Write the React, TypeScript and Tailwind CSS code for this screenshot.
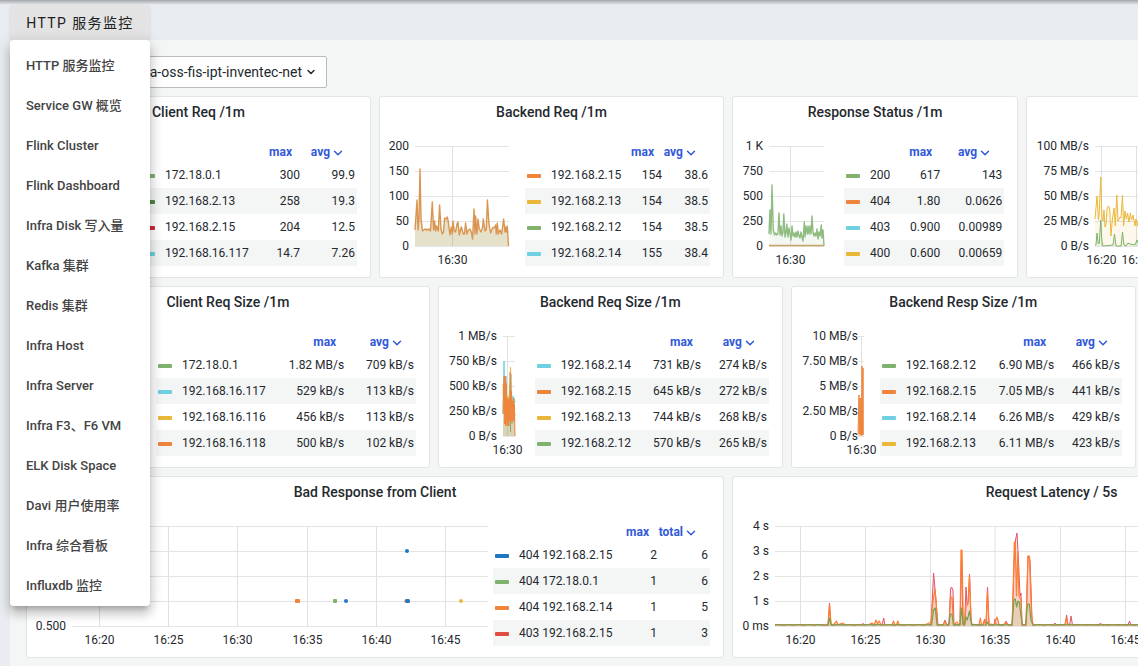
import type { ReactNode } from 'react';
import { ChevronDown } from 'lucide-react';

type Point = [number, number];
type Tick = [number, string];
type LegendRow = [color: string, name: string, max: string, last: string];

const GREEN = '#7eb26d';
const ORANGE = '#ef843c';
const YELLOW = '#eab839';
const CYAN = '#6ed0e0';
const BLUE = '#1f78c1';
const RED = '#e24d42';

const PLOT_TOP = 17;
const PLOT_HEIGHT = 100;

const menuItems = [
  'HTTP 服务监控',
  'Service GW 概览',
  'Flink Cluster',
  'Flink Dashboard',
  'Infra Disk 写入量',
  'Kafka 集群',
  'Redis 集群',
  'Infra Host',
  'Infra Server',
  'Infra F3、F6 VM',
  'ELK Disk Space',
  'Davi 用户使用率',
  'Infra 综合看板',
  'Influxdb 监控',
];

function linePath(points: Point[]) {
  return points.map(([x, v], i) => `${i ? 'L' : 'M'}${x} ${PLOT_HEIGHT - v}`).join('');
}

function areaPath(points: Point[]) {
  const first = points[0][0];
  const last = points[points.length - 1][0];
  return `${linePath(points)}L${last} ${PLOT_HEIGHT}L${first} ${PLOT_HEIGHT}Z`;
}

function Series({ points, color, fill = color, opacity = 0.1, width = 1 }: {
  points: Point[]; color: string; fill?: string; opacity?: number; width?: number;
}) {
  return (
    <>
      <path d={areaPath(points)} fill={fill} fillOpacity={opacity} />
      <path d={linePath(points)} fill="none" stroke={color} strokeWidth={width} strokeLinejoin="round" />
    </>
  );
}

function Chart({ width, left, plotWidth, yTicks, xTicks, labelGap = 6, children }: {
  width: number; left: number; plotWidth: number; yTicks: string[]; xTicks: Tick[]; labelGap?: number; children?: ReactNode;
}) {
  return (
    <svg width={width} height={148} className="shrink-0 overflow-visible text-xs">
      <g transform={`translate(${left} ${PLOT_TOP})`}>
        {[0, 25, 50, 75, 100].map((y) => (
          <line key={y} x1={0} x2={plotWidth} y1={y + 0.5} y2={y + 0.5} stroke="#e4e4e4" />
        ))}
        {xTicks.map(([x]) => (
          <line key={x} x1={x} x2={x} y1={0} y2={PLOT_HEIGHT} stroke="#e0e0e0" />
        ))}
        {children}
        {yTicks.map((label, i) => (
          <text key={label} x={-labelGap} y={PLOT_HEIGHT - 25 * (yTicks.length - 1 - i) + 4} textAnchor="end" fill="#24292e">
            {label}
          </text>
        ))}
        {xTicks.map(([x, label]) => (
          <text key={x} x={x} y={PLOT_HEIGHT + 18} textAnchor="middle" fill="#24292e">
            {label}
          </text>
        ))}
      </g>
    </svg>
  );
}

function Legend({ rows, columns, lastLabel = 'avg' }: {
  rows: LegendRow[]; columns: [number, number]; lastLabel?: string;
}) {
  return (
    <table className="mr-[13px] mt-[13px] h-min min-w-0 flex-1 table-fixed border-collapse text-xs">
      <colgroup>
        <col />
        <col style={{ width: columns[0] }} />
        <col style={{ width: columns[1] }} />
      </colgroup>
      <thead>
        <tr className="h-5 text-[#3259d8]">
          <th />
          <th className="p-0 pr-2 text-right font-bold">
            <button type="button" className="font-bold">max</button>
          </th>
          <th className="p-0 pr-3">
            <button type="button" className="ml-auto flex items-center justify-end gap-px font-bold">
              {lastLabel}
              <ChevronDown size={14} strokeWidth={2.5} className="mt-0.5 shrink-0" />
            </button>
          </th>
        </tr>
      </thead>
      <tbody>
        {rows.map(([color, name, max, last]) => (
          <tr key={name} className="h-[26px] whitespace-nowrap even:bg-[#f4f5f5]">
            <td className="p-0 pl-0.5">
              <span className="flex items-center gap-[10px]">
                <span className="mt-0.5 h-1 w-3.5 shrink-0 rounded-[1px]" style={{ backgroundColor: color }} />
                {name}
              </span>
            </td>
            <td className="p-0 text-right">{max}</td>
            <td className="p-0 pr-0.5 text-right">{last}</td>
          </tr>
        ))}
      </tbody>
    </table>
  );
}

function Panel({ title, span, children }: { title?: string; span: string; children?: ReactNode }) {
  return (
    <section className={`${span} flex h-[182px] flex-col overflow-hidden rounded-[3px] border border-[#e2e4e5] bg-white`}>
      <div className="h-8 shrink-0">
        {title && <h2 className="text-center text-sm font-medium leading-[30px]">{title}</h2>}
      </div>
      <div className="flex flex-1">{children}</div>
    </section>
  );
}

const backendReq: Point[] = [
  [0, 16], [2, 46], [3, 16], [4, 28], [5, 77], [6, 28], [7.5, 15], [10, 17], [12, 16], [14, 17], [15.5, 15],
  [17.3, 44], [18.6, 16], [19.6, 25], [20.6, 15], [21.6, 20], [23.3, 15], [24.6, 41], [26, 17], [27.3, 12],
  [28.5, 14], [29.6, 28], [31, 27], [32.3, 29], [33.3, 24], [35, 11], [36.3, 19], [37.3, 12], [38, 25],
  [39.3, 15], [40.6, 14], [42, 22], [43, 24], [44.3, 11], [46.3, 19], [48.3, 12], [49.5, 12], [50.6, 23],
  [52, 12], [53.3, 16], [55, 17], [56.3, 14], [57.6, 7], [59, 37], [60, 12], [60.6, 30], [62, 12], [63, 27],
  [64.3, 17], [66, 14], [67.6, 19], [68.3, 27], [70, 15], [71.3, 17], [72.4, 46], [74, 22], [75.6, 13],
  [77.6, 18], [80, 19], [80.6, 21], [81.3, 12], [82.3, 23], [83.3, 12], [85, 16], [86.6, 12], [88.6, 27],
  [90, 14], [90.6, 19], [91.3, 14], [92.3, 20], [93.5, 0],
];

const status200: Point[] = [
  [0, 12], [1, 36], [2, 12], [3, 61], [4.3, 16], [5.6, 11], [6.6, 13], [8, 11], [9, 13], [10, 33], [11, 11],
  [12, 20], [13, 10], [14, 14], [14.8, 32], [16, 9], [17, 13], [17.8, 22], [19, 9], [20, 18], [21, 12],
  [22, 6], [23, 20], [24, 10], [25, 13], [26, 9], [27, 14], [28, 9], [29, 15], [30, 10], [31, 8], [32, 14],
  [33, 9], [34, 5], [35.3, 24], [36, 9], [37, 20], [38.3, 12], [39, 20], [40, 12], [41, 20], [42, 12],
  [43, 30], [44, 14], [45, 10], [46, 13], [47, 10], [48, 17], [49, 7], [50, 14], [51, 10], [52.3, 21],
  [53, 8], [54, 16], [55, 0],
];

const throughputIn: Point[] = [
  [0, 27], [2, 50], [3.5, 26], [4.3, 34], [5.7, 69], [7, 28], [8, 25], [9, 36], [10, 19], [11, 22], [12, 37],
  [13.3, 40], [14.6, 38], [16, 10], [17.3, 26], [19, 38], [20.3, 20], [21.8, 51], [23, 25], [25, 29],
  [26, 28], [27.5, 51], [28.6, 20], [30, 35], [31.3, 27], [32.5, 33], [34, 24], [35.3, 33], [36.6, 26],
  [38, 31], [40, 20], [41, 27], [42.5, 20], [44, 30],
];

const throughputOut: Point[] = [
  [0, 1], [1, 1], [2, 13], [3.3, 2], [4.3, 3], [5.7, 26], [7, 4], [8, 0], [18, 1], [19.5, 12], [21, 0],
  [26, 0], [27.5, 14], [29, 1], [31, 0], [33, 3], [35, 2], [40, 1], [42, 6], [44, 1],
];

const sizeCyan: Point[] = [[0, 22], [1, 75], [2, 30], [3, 60], [4, 22], [6, 40], [8, 62], [9, 30], [10, 40], [12, 33]];
const sizeYellow: Point[] = [[0, 52], [1, 24], [2, 40], [3, 20], [5, 40], [6, 16], [7.5, 69], [8.5, 28], [10, 36], [12, 20]];
const sizeOrange: Point[] = [
  [0, 22], [0.6, 50], [1.2, 60], [1.7, 12], [2.2, 60], [2.7, 10], [3.2, 53], [3.8, 11], [4.3, 38], [4.8, 10],
  [5.3, 36], [5.8, 10], [6.3, 38], [6.8, 15], [7.2, 64], [7.8, 14], [8.3, 45], [8.8, 15], [9.3, 35], [9.8, 16],
  [10.4, 38], [10.9, 14], [11.4, 32], [12, 0],
];
const respOrange: Point[] = [
  [0, 2], [1, 41], [1.4, 2], [2, 38], [2.5, 1], [3, 38], [3.5, 1], [4, 70], [4.5, 1], [5, 68], [5.3, 1],
];

function withNoise(peaks: Point[], end: number): Point[] {
  const result: Point[] = [];
  let previous = 0;
  for (const peak of [...peaks, [end, 1] as Point]) {
    for (let x = previous + 2; x < peak[0] - 2.5; x += 2) {
      result.push([x, 1 + ((x * 7) % 5) * 0.12]);
    }
    result.push(peak);
    previous = peak[0];
  }
  return [[0, 1], ...result];
}

const latencyRed = withNoise([
  [53, 1], [54.5, 23], [56, 1], [86, 1], [88, 2.5], [90, 1], [107, 1], [108.7, 8], [110, 1], [156, 1], [158.6, 53], [161, 25], [163, 1],
  [168, 1], [170, 6], [172, 1], [174, 1], [175.5, 37], [176.5, 39], [178, 36], [179, 1], [185, 1], [186.6, 70],
  [188, 1], [189.6, 2], [191, 39], [192, 22], [193.2, 24], [194.5, 52], [196, 8], [197, 1], [208, 1],
  [209.5, 7], [211, 1], [212.5, 39], [214, 1], [219, 1], [220, 7], [221, 2], [229, 1], [231, 5], [233, 1],
  [237, 1], [239, 60], [240.5, 86], [242, 93], [243.5, 65], [245, 30], [246, 33], [247, 1], [251, 1],
  [253, 70], [255, 66], [257, 8], [258, 1], [278, 1], [280, 3], [281, 1], [290, 1], [291.6, 11], [293, 1], [294.6, 1], [296, 10],
  [297.5, 1], [324, 1], [325.5, 3], [327, 1], [353, 1], [354.5, 5], [356, 1],
], 590);

const latencyOrange = withNoise([
  [53, 1], [54.5, 21], [56, 2], [58, 1], [60, 3], [61.5, 5], [63, 1], [67, 3], [69, 2], [72, 1], [97, 3],
  [99, 1], [101, 6], [102.5, 2], [104.3, 5], [106, 1], [117, 1], [118.5, 5], [120, 1], [121.5, 1], [122.8, 5],
  [124, 1], [152, 2], [156, 4], [158, 25], [160, 37], [161.3, 22], [162.3, 1], [168, 1], [170, 4], [172, 1],
  [174, 1], [175.6, 29], [177, 29], [178.5, 1], [182, 4], [184, 1], [185, 1], [186, 76], [187, 76], [188.3, 1],
  [189.6, 1], [191, 20], [193, 22], [194.5, 50], [196, 6], [197, 1], [204, 1], [205.3, 8], [206.6, 1],
  [208, 2], [209.5, 5], [211, 1], [212.5, 34], [214, 1], [216, 2], [219, 1], [222, 9], [224, 1], [231, 3],
  [237.3, 1], [239.3, 84], [240.2, 84], [241.5, 30], [242.8, 74], [244, 30], [246, 26], [247, 1], [251, 1],
  [253, 70], [254.5, 70], [256.5, 12], [258, 1], [290, 1], [291.5, 8], [293, 1],
], 590);

const latencyGreen = withNoise([
  [53, 1], [54.5, 8], [56, 1], [156.5, 1], [158.6, 16], [160.3, 18], [162, 1], [173.6, 1], [175.5, 12],
  [177, 12], [178.5, 1], [185, 1], [186.5, 18], [188, 2], [189.6, 1], [191, 9], [192.3, 6], [194.5, 15], [196.5, 1],
  [211, 1], [212.5, 4], [214, 1], [237, 1], [239, 26], [240.3, 27], [241.6, 19], [243, 25], [244.3, 24],
  [246, 10], [247.5, 1], [250.5, 1], [252.6, 22], [254.3, 22], [256, 6], [258, 1],
], 590);

function Dashboard() {
  return (
    <div className="ml-[10px] bg-[#f4f5f5] p-4 pb-2">
      <div className="relative mb-2 w-[301px]">
        <select
          aria-label="Host"
          className="h-8 w-full appearance-none rounded-[2px] border border-[#b9bcbf] bg-white pr-6 text-sm [text-align-last:right]"
        >
          <option>infra-oss-fis-ipt-inventec-net</option>
        </select>
        <ChevronDown size={12} strokeWidth={3} className="pointer-events-none absolute right-[10px] top-[10px]" />
      </div>

      <div className="grid w-full min-w-[1404px] grid-cols-[repeat(24,minmax(0,1fr))] gap-2">
        <Panel title="Client Req /1m" span="col-span-6">
          <Chart width={112} left={40} plotWidth={60} yTicks={[]} xTicks={[]} />
          <Legend
            columns={[50, 57]}
            rows={[
              [GREEN, '172.18.0.1', '300', '99.9'],
              ['#508642', '192.168.2.13', '258', '19.3'],
              ['#d0263c', '192.168.2.15', '204', '12.5'],
              [CYAN, '192.168.16.117', '14.7', '7.26'],
            ]}
          />
        </Panel>

        <Panel title="Backend Req /1m" span="col-span-6">
          <Chart width={145} left={35} plotWidth={94} yTicks={['200', '150', '100', '50', '0']} xTicks={[[37.5, '16:30']]}>
            <Series points={backendReq} color="#db9550" fill="#a89a52" opacity={0.3} width={1.4} />
          </Chart>
          <Legend
            columns={[40, 48]}
            rows={[
              [ORANGE, '192.168.2.15', '154', '38.6'],
              [YELLOW, '192.168.2.13', '154', '38.5'],
              [GREEN, '192.168.2.12', '154', '38.5'],
              [CYAN, '192.168.2.14', '155', '38.4'],
            ]}
          />
        </Panel>

        <Panel title="Response Status /1m" span="col-span-5">
          <Chart width={111} left={36} plotWidth={55} yTicks={['1 K', '750', '500', '250', '0']} xTicks={[[21.5, '16:30']]}>
            <Series points={status200} color="#8fbc80" width={1.4} />
            <path d="M0 99.5H55" stroke="#c9a36a" strokeWidth={1.6} />
          </Chart>
          <Legend
            columns={[50, 64]}
            rows={[
              [GREEN, '200', '617', '143'],
              [ORANGE, '404', '1.80', '0.0626'],
              [CYAN, '403', '0.900', '0.00989'],
              [YELLOW, '400', '0.600', '0.00659'],
            ]}
          />
        </Panel>

        <Panel span="col-span-7">
          <Chart
            width={400}
            left={68}
            plotWidth={320}
            yTicks={['100 MB/s', '75 MB/s', '50 MB/s', '25 MB/s', '0 B/s']}
            xTicks={[[6.5, '16:20'], [41.5, '16:25']]}
          >
            <Series points={throughputIn} color={YELLOW} />
            <Series points={throughputOut} color={GREEN} />
          </Chart>
        </Panel>

        <Panel title="Client Req Size /1m" span="col-span-7">
          <Chart width={129} left={60} plotWidth={50} yTicks={[]} xTicks={[]} />
          <Legend
            columns={[80, 73]}
            rows={[
              [GREEN, '172.18.0.1', '1.82 MB/s', '709 kB/s'],
              [CYAN, '192.168.16.117', '529 kB/s', '113 kB/s'],
              [YELLOW, '192.168.16.116', '456 kB/s', '113 kB/s'],
              [ORANGE, '192.168.16.118', '500 kB/s', '102 kB/s'],
            ]}
          />
        </Panel>

        <Panel title="Backend Req Size /1m" span="col-span-6">
          <Chart
            width={96}
            left={64}
            plotWidth={12}
            yTicks={['1 MB/s', '750 kB/s', '500 kB/s', '250 kB/s', '0 B/s']}
            xTicks={[[4.5, '16:30']]}
          >
            <Series points={sizeCyan} color={CYAN} />
            <Series points={sizeYellow} color={YELLOW} />
            <path d="M7.5 85V96M9 80V88M11 62V72" stroke={GREEN} />
            <Series points={sizeOrange} color={ORANGE} fill="#a89a52" opacity={0.35} />
          </Chart>
          <Legend
            columns={[70, 68]}
            rows={[
              [CYAN, '192.168.2.14', '731 kB/s', '274 kB/s'],
              [ORANGE, '192.168.2.15', '645 kB/s', '272 kB/s'],
              [YELLOW, '192.168.2.13', '744 kB/s', '268 kB/s'],
              [GREEN, '192.168.2.12', '570 kB/s', '265 kB/s'],
            ]}
          />
        </Panel>

        <Panel title="Backend Resp Size /1m" span="col-span-6">
          <Chart
            width={88}
            left={66}
            plotWidth={6}
            labelGap={0}
            yTicks={['10 MB/s', '7.50 MB/s', '5 MB/s', '2.50 MB/s', '0 B/s']}
            xTicks={[[3.5, '16:30']]}
          >
            <Series points={respOrange} color={ORANGE} opacity={0.4} />
          </Chart>
          <Legend
            columns={[80, 69]}
            rows={[
              [GREEN, '192.168.2.12', '6.90 MB/s', '466 kB/s'],
              [ORANGE, '192.168.2.15', '7.05 MB/s', '441 kB/s'],
              [CYAN, '192.168.2.14', '6.26 MB/s', '429 kB/s'],
              [YELLOW, '192.168.2.13', '6.11 MB/s', '423 kB/s'],
            ]}
          />
        </Panel>

        <Panel span="col-span-5" />

        <Panel title="Bad Response from Client" span="col-span-12">
          <Chart
            width={466}
            left={45}
            plotWidth={416}
            yTicks={['0.500']}
            xTicks={[[27.5, '16:20'], [96.5, '16:25'], [165.5, '16:30'], [235.5, '16:35'], [304.5, '16:40'], [373.5, '16:45']]}
          >
            <rect x={223} y={73} width={5} height={4} rx={1} fill={ORANGE} />
            <rect x={261} y={73} width={4} height={4} rx={1} fill={GREEN} />
            <circle cx={274} cy={75} r={2} fill={BLUE} />
            <circle cx={335} cy={25} r={2} fill={BLUE} />
            <circle cx={334.5} cy={75} r={2} fill={RED} />
            <rect x={333.5} y={73} width={4.5} height={4} rx={1.5} fill={BLUE} />
            <circle cx={389} cy={75} r={2} fill={YELLOW} />
          </Chart>
          <Legend
            columns={[34, 53]}
            lastLabel="total"
            rows={[
              [BLUE, '404 192.168.2.15', '2', '6'],
              [GREEN, '404 172.18.0.1', '1', '6'],
              [ORANGE, '404 192.168.2.14', '1', '5'],
              [RED, '403 192.168.2.15', '1', '3'],
            ]}
          />
        </Panel>

        <Panel title="Request Latency / 5s" span="col-span-11">
          <Chart
            width={637}
            left={42}
            plotWidth={590}
            yTicks={['4 s', '3 s', '2 s', '1 s', '0 ms']}
            xTicks={[[25.5, '16:20'], [90.5, '16:25'], [155.5, '16:30'], [220, '16:35'], [285.5, '16:40'], [350.5, '16:45']]}
          >
            <Series points={latencyRed} color="#e0566e" opacity={0.15} />
            <Series points={latencyOrange} color="#ff7f32" opacity={0.18} width={1.2} />
            <Series points={latencyGreen} color="#75a24f" opacity={0.12} width={1.2} />
          </Chart>
        </Panel>
      </div>
    </div>
  );
}

export default function App() {
  return (
    <div className="relative h-screen overflow-hidden bg-[#e9edf1] font-[Roboto,'Noto_Sans_CJK_SC',sans-serif] text-[#24292e]">
      <div className="h-[5px] bg-linear-to-b from-[#a5a8aa] to-[#e9edf1]" />
      <header className="flex h-[35px] pl-[10px]">
        <button
          type="button"
          className="w-[140px] rounded bg-[#e3e3e3] text-sm tracking-widest text-[#202020] shadow-sm"
        >
          HTTP 服务监控
        </button>
      </header>
      <Dashboard />
      <nav className="absolute left-[10px] top-10 w-[140px] rounded bg-white pt-[6px] shadow-[0_5px_5px_-3px_rgba(0,0,0,0.2),0_8px_10px_1px_rgba(0,0,0,0.14),0_3px_14px_2px_rgba(0,0,0,0.12)]">
        {menuItems.map((item) => (
          <a key={item} href="#" className="flex h-10 items-center px-4 text-[13px] font-medium text-[#444444]">
            {item}
          </a>
        ))}
      </nav>
    </div>
  );
}
